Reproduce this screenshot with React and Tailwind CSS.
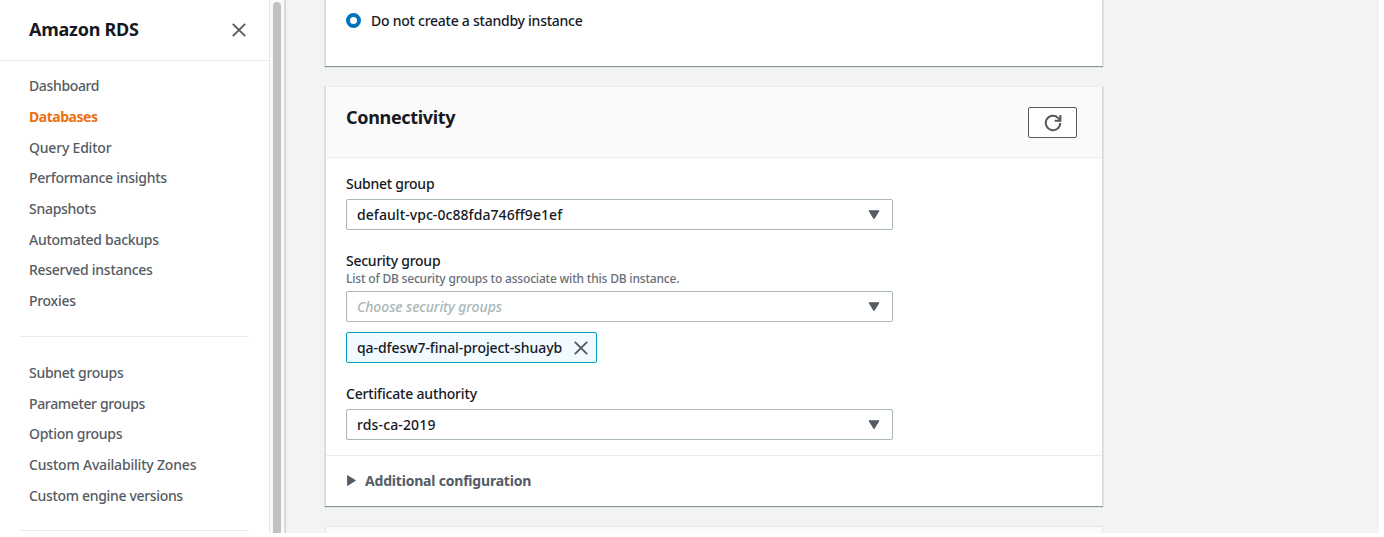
const navOne = ["Dashboard", "Databases", "Query Editor", "Performance insights", "Snapshots", "Automated backups", "Reserved instances", "Proxies"];
const navTwo = ["Subnet groups", "Parameter groups", "Option groups", "Custom Availability Zones", "Custom engine versions"];
const navStyles = {
  Dashboard: "tracking-[-0.36px]",
  Databases: "font-bold tracking-[-0.48px] text-[#ec7211]",
  "Query Editor": "tracking-[-0.2px]",
  "Parameter groups": "tracking-[-0.35px]",
  "Custom Availability Zones": "tracking-[-0.19px]",
  "Custom engine versions": "tracking-[-0.33px]",
};

function T({ children, className = "" }) {
  return <span className={"block h-[22px] shrink-0 whitespace-nowrap leading-[21px] " + className}>{children}</span>;
}

function Nav({ items }) {
  return (
    <ul className="flex flex-col pl-[29px] text-[#545b64]">
      {items.map((t) => (
        <li key={t} className="flex h-[30.7px] items-center">
          <T className={navStyles[t] || "tracking-[-0.28px]"}>{t}</T>
        </li>
      ))}
    </ul>
  );
}

function Select({ children, className = "" }) {
  return (
    <div className="flex h-[31px] w-[547px] items-center justify-between rounded-[2px] border border-[#aab7b8] bg-white pl-[10px] pr-[12px]">
      <T className={className}>{children}</T>
      <svg width="12" height="10" viewBox="0 0 12 10"><path d="M1 .8h10L6 8.8z" fill="#545b64" stroke="#545b64" strokeLinejoin="round" /></svg>
    </div>
  );
}

function Cross() {
  return (
    <svg width="14" height="14" viewBox="0 0 14 14" fill="none" stroke="#545b64" strokeWidth="1.9"><path d="M.8.8l12.4 12.4M13.2.8L.8 13.2" /></svg>
  );
}

export default function App() {
  return (
    <div className="h-[537px] w-[1384px] overflow-hidden bg-white font-['Noto_Sans',sans-serif]">
      <div className="flex h-[533px] w-[1379px] overflow-hidden bg-[#f2f3f3] text-[14px] font-medium tracking-[-0.25px] text-[#16191f]">
        <aside className="flex h-full w-[286px] shrink-0 border-r-2 border-[#d5dbdb] bg-white">
          <div className="w-[269px] shrink-0">
            <header className="flex h-[61px] items-center justify-between border-b border-[#eaeded] pl-[29px] pr-[23px] text-[18px] font-bold">
              <T>Amazon RDS</T>
              <Cross />
            </header>
            <div className="pt-[10px]"><Nav items={navOne} /></div>
            <div className="ml-[19px] mt-[19px] h-px w-[230px] bg-[#eaeded]" />
            <div className="pt-[21px]"><Nav items={navTwo} /></div>
            <div className="ml-[19px] mt-[19px] h-px w-[230px] bg-[#eaeded]" />
          </div>
          <div className="flex w-[15px] border-l border-[#e8e8e8] bg-[#fafafa] pl-[3px] pt-[2px]">
            <div className="h-[600px] w-2 rounded-full bg-[#c1c1c1]" />
          </div>
        </aside>
        <main className="ml-[39px] w-[778px] shrink-0">
          <section className="flex h-[66px] gap-[10px] border-x border-[#d5dbdb] bg-white pl-5 pt-[10px] shadow-[0_1px_1px_#879596]">
            <div className="mt-[3px] h-[15px] w-[15px] rounded-full border-[4.5px] border-[#0073bb] bg-white" />
            <T>Do not create a standby instance</T>
          </section>
          <section className="mt-5 h-[420px] border-x border-t border-x-[#d5dbdb] border-t-[#eaeded] bg-white shadow-[0_1px_1px_#879596]">
            <header className="flex h-[71px] justify-between border-b border-[#eaeded] bg-[#fafafa] pl-5 pr-[25px] text-[18px] font-bold">
              <div className="pt-5"><T className="tracking-[-0.33px]">Connectivity</T></div>
              <div className="mt-[20px] flex h-[31px] w-[49px] items-center justify-center rounded-[2px] border border-[#545b64] bg-white">
                <svg width="18" height="18" viewBox="0 0 18 18" fill="none" stroke="#545b64" strokeWidth="2"><path d="M16.2 9a7.2 7.2 0 1 1-2.1-5.1L16 5.8M16.4 1v5.7h-5.8" /></svg>
              </div>
            </header>
            <div className="flex h-[298px] flex-col border-b border-[#eaeded] pl-5 pt-[15px]">
              <T>Subnet group</T>
              <div className="mt-[4px]"><Select className="tracking-[0.07px]">default-vpc-0c88fda746ff9e1ef</Select></div>
              <div className="mt-[20px] h-[18px]"><T>Security group</T></div>
              <div className="h-[23px] text-[12px]"><T className="tracking-[-0.19px] text-[#687078]">List of DB security groups to associate with this DB instance.</T></div>
              <Select className="italic tracking-[-0.08px] text-[#aab7b8]">Choose security groups</Select>
              <div className="mt-[10px] flex h-[31px] w-[251px] items-center justify-between rounded-[2px] border border-[#00a1c9] bg-[#f1faff] pl-[10px] pr-[8px]">
                <T className="tracking-[-0.07px]">qa-dfesw7-final-project-shuayb</T>
                <Cross />
              </div>
              <div className="mb-[4px] mt-[20px]"><T className="tracking-[-0.18px]">Certificate authority</T></div>
              <Select className="tracking-[0.14px]">rds-ca-2019</Select>
            </div>
            <div className="flex h-[50px] items-center gap-[9px] pl-[21px] font-bold text-[#545b64]">
              <svg className="-mt-px" width="9" height="11" viewBox="0 0 9 11"><path d="M.5.5v10l8-5z" fill="currentColor" stroke="currentColor" strokeWidth=".8" strokeLinejoin="round" /></svg>
              <T className="tracking-[-0.2px]">Additional configuration</T>
            </div>
          </section>
          <section className="mt-5 h-10 border-x border-t border-[#e3e7e7] bg-[#fafafa]" />
        </main>
      </div>
    </div>
  );
}
